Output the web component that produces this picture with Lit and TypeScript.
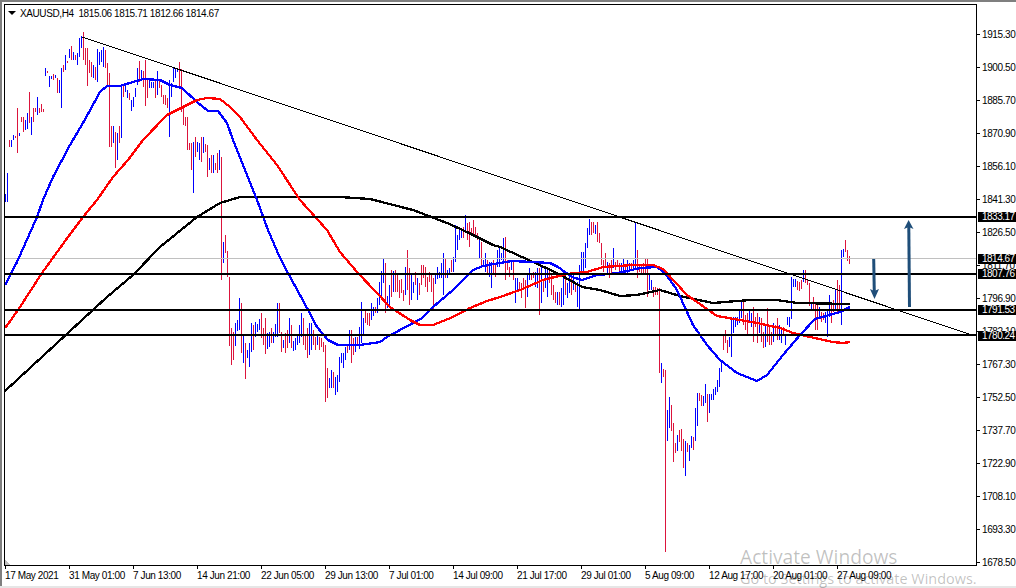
import { LitElement, html, css, svg } from "lit";
import { customElement } from "lit/decorators.js";

type Bar = { x: number; top: number; bot: number; up: boolean };

function seg(ox: number, oy: number, src: string): Bar[] {
  return src
    .trim()
    .split(/\s+/)
    .map((t) => {
      const m = /^(\d+)([rb])(\d+),(\d+)$/.exec(t)!;
      const v = ox + Number(m[1]) / 3;
      return {
        x: 2 * Math.floor(v / 2) + 1,
        top: Math.round(oy + Number(m[3]) / 3),
        bot: Math.round(oy + Number(m[4]) / 3),
        up: m[2] === "b",
      };
    });
}

const BARS: Bar[] = [
  { x: 5, top: 194, bot: 202, up: true },
  { x: 7, top: 173, bot: 202, up: true },
  ...seg(0, 0, `27r420,440 33b420,440 39b405,420 45r408,415 51r325,460 57b400,408 63r352,365 69r350,395 75b360,390 81b338,388 87r277,370 93b350,406 99r325,365 105r325,335 111b292,345 117r325,340 123r312,335 129r328,336
  135b205,228 141r213,218 147b228,260 153b228,238 159r222,240 165b225,235 171r235,280 177b240,280 183b205,325 189r195,215 195b165,210 201r182,190 207b148,175 213r137,180 219b155,180 225r165,180 231b160,195 237b113,170 243b107,145 249r97,180 255r143,195 261r145,258 267r180,220 273r185,230 279b195,235 285r200,240 291b148,245 297b155,195 303b150,185 309b142,200 315r150,205 321r190,255 327r220,440 333r378,440 339b378,430 345r395,505 351b400,480 357r378,430 363b255,415 369r252,290 375b255,275 381b270,295 387r280,300 393b300,333 399b292,320 405b265,290 411b205,255 417r183,245 423b210,240 429r212,260 435r180,318 441r235,295 447b240,265 453b245,265 459b245,265 465r240,295 471b213,285 477r240,265 483r255,290 489r285,312 495r285,315 501r295,325 507b240,410 513b250,290 519b205,245 525b205,235 531b203,215 537r185,262 543r208,335 549r325,375 555r352,378 561r352,450 567r430,450 573r428,510 579b425,578 585r410,470 591b425,455 597b430,480 603r410,485 609b410,460 615r433,455 621r435,530 627b475,510 633r465,520 639b465,520 645r490,510 651r460,520 657b450,510 663r470,840`),
  ...seg(200, 230, `70b35,100 76r15,70 82r62,140 88r140,348 94r293,405 100r305,390 106b280,348 112b270,303 118b204,300 124r220,368 130b315,400 136r340,446 142b360,385 148b338,410 154b280,365 160r285,360 166b275,320 172b282,305 178b266,300 184r250,325 190r293,345 196r265,372 202b310,358 208b305,350 214r295,340 220b305,340 226b282,320 232b220,320 238r220,310 244r305,365 250b330,355 256r310,368 262r300,355 268b265,340 274r285,355 280b333,362 286b325,360 292b315,345 298b285,340 304b250,320 310r265,345 316r315,360 322r295,383 328b280,375 334b280,360 340r300,345 346r320,360 352b315,345 358r320,360 364r325,350 370r335,365 376r345,515 382r415,505 388b445,475 394b420,475 400r425,475 406b440,495 412b435,485 418b380,455 424b370,400 430b368,415 436b350,390 442r345,370 448b300,360 454r300,398 460r325,375 466b320,365 472r320,345 478b290,358 484b215,340 490b265,318 496r240,280 502r250,285 508r250,288 514b220,270 520b230,258 526r230,250 532b205,250 538b155,225 544b122,200 550b85,160 556r98,250 562b198,235 568b165,225 574r120,200 580b122,185 586r120,185 592r132,185 598r150,205 604r148,190 610r180,212 616b110,195 622r60,180 628r115,225 634b130,210 640b155,190 646r125,165 652b145,210 658r160,195 664r105,165`),
  ...seg(360, 210, `189r165,205 195r170,230 201r200,245 207r185,215 213r190,245 219r205,300 225b190,222 231b170,208 237b185,205 243b160,205 249b128,255 255r145,205 261b180,205 267b175,195 273r150,185 279b140,185 285b45,155 291b75,120 297b50,90 303b55,85 309r50,85 315b15,60 321r40,90 327r35,110 333r55,75 339r30,75 345r50,80 351r70,90 357b80,145 363r95,170 369b150,170 375b128,185 381r150,190 387b155,200 393b155,235 399r150,195 405r165,200 411b120,170 417b115,170 423b130,150 429b85,160 435r80,210 441r150,180 447r170,200 453b150,180 459r155,210 465b205,280 471b205,240 477r215,240 483r220,265 489r205,240 495r210,295 501b190,260 507b175,210 513r190,210 519r185,205 525b185,230 531b175,235`),
  ...seg(500, 210, `119r175,315 125b170,280 131r210,245 137b170,235 143b170,260 149r175,220 155r195,255 161r225,270 167r245,280 173b245,285 179r245,285 185b235,290 191b180,285 197r195,255 203b220,265 209b195,250 215r195,255 221b195,240 227r215,245 233b215,290 239b165,297 245b125,195 251b125,195 257b100,175 263b55,115 269b28,75 275r35,75 281r35,70 287b45,72 293r35,95 299r70,100 305r100,165 311r150,185 317r130,175 323b155,190 329r160,205 335r150,195 341b115,175 347r155,180 353r150,170 359r160,185 365b160,190 371b145,195 377r165,190 383b150,195 389b160,185 395r160,180 401b150,180 407b35,175 413r120,205 419r165,185 425r165,190 431r160,190 437r145,190 443r145,260 449b190,240 455b210,240 461r230,260 467r230,255 473r235,255 479r235,490 485b458,520 491r478,500`),
  ...seg(620, 360, `136r30,575 142b150,242 148b110,205 154r135,212 160r190,305 166r250,278 172b225,272 178r210,245 184r207,272 190r237,323 196b243,347 202r250,275 208b255,302 214b228,263 220r232,270 226b145,242 232b100,197 238r100,122 244r105,137 250b108,137 256b72,128 262r102,185 268b103,158 274b103,120 280b88,120 286b82,105 292b60,95 298b25,82 304b0,35`),
  ...seg(500, 210, `669r375,420 675r360,400 681r390,430 687b380,410 693b330,440 699b320,370 705b320,350 711b320,345 717b300,340 723b275,325 729r275,345 735r315,360 741r310,375 747b300,340 753b310,350 759r290,395 765r320,350 771r310,400 777b320,370 783r325,395 789r365,415 795b345,410 801r295,395 807r345,405 813r365,405 819b340,395 825r345,375 831r325,390 837b345,390 843b355,400 849r350,375 855b375,405 861b320,345 867b320,350`),
  ...seg(700, 260, `274b52,178 280b58,80 286b58,80 292r62,90 298r65,92 304r60,88 310b30,65 316r30,70 322r60,75 328r70,138 334b125,150 340r110,150 346r125,210 352r125,210 358b140,175 364r155,185 370r160,180 376b155,190 382b150,230 388b105,170 394r135,190 400r120,155 406b90,150 412r60,155 418r75,160`),
  ...seg(780, 200, `185b150,375 191b148,170 197r120,155 203r150,182 209r168,192`),
];

const BLUE = [[5,285],[17,262],[37,217],[43,200],[53,177],[70,145],[83,123],[100,92],[107,86],[120,86],[133,82],[143,79],[160,80],[170,85],[182,88],[197,102],[208,111],[218,111],[227,123],[233,140],[243,165],[257,200],[268,230],[280,258],[288,273],[307,308],[317,327],[328,340],[338,345],[360,345],[380,342],[387,337],[413,323],[422,318],[433,307],[453,290],[473,270],[483,266],[500,263],[512,261],[533,262],[550,263],[558,267],[572,277],[582,280],[597,275],[610,274],[623,272],[640,268],[657,267],[665,273],[677,290],[693,325],[707,345],[720,360],[737,373],[757,381],[767,375],[783,355],[800,335],[815,319],[840,312],[850,307]];
const RED = [[5,328],[11,320],[20,307],[42,273],[68,237],[83,217],[97,200],[113,177],[128,160],[143,140],[167,115],[197,100],[207,98],[220,99],[230,107],[240,117],[257,140],[277,165],[300,200],[327,230],[340,252],[357,272],[377,293],[390,307],[410,320],[420,325],[433,325],[453,317],[470,308],[487,301],[500,297],[520,290],[543,280],[567,274],[587,272],[603,267],[633,265],[653,265],[663,269],[687,295],[717,316],[757,323],[780,328],[793,333],[810,337],[833,342],[843,343],[850,342]];
const BLACK = [[5,391],[82,320],[107,297],[133,275],[160,247],[197,217],[220,203],[240,197],[257,197],[340,197],[370,199],[413,210],[447,223],[467,232],[493,245],[500,247],[533,262],[557,273],[582,287],[600,290],[620,296],[637,295],[660,290],[680,296],[713,303],[750,300],[777,300],[797,303],[850,304]];

const PRICES = ["1915.30","1900.50","1885.70","1870.90","1856.10","1841.30","1826.50","1811.70","1796.90","1782.10","1767.30","1752.50","1737.70","1722.90","1708.10","1693.30","1678.50"];
const TIMES = ["17 May 2021","31 May 01:00","7 Jun 13:00","14 Jun 21:00","22 Jun 05:00","29 Jun 13:00","7 Jul 01:00","14 Jul 09:00","21 Jul 17:00","29 Jul 01:00","5 Aug 09:00","12 Aug 17:00","20 Aug 01:00","27 Aug 09:00"];
const TAGS: [string, number][] = [["1833.17",212],["1814.67",254],["1807.76",269],["1791.53",305],["1780.24",331]];
const LEVELS = [217, 274, 310, 335];

const pts = (a: number[][]) => a.map((p) => p.join(",")).join(" ");

@customElement("app-root")
export class AppRoot extends LitElement {
  static styles = css`
    :host { display: block; width: 1016px; height: 588px; position: relative; overflow: hidden; background: #fff; font-family: "Liberation Sans", Arial, sans-serif; font-size: 10px; letter-spacing: -0.4px; color: #000; }
    .window { box-sizing: border-box; height: 588px; border-top: 2px solid #7f7f7f; border-bottom: 2px solid #e6e6e6; padding: 2px 0 0 4px; position: relative; display: grid; grid-template-columns: 973px 1fr; grid-template-rows: 562px 1fr; }
    .window::before { content: ""; position: absolute; left: 0; top: -2px; bottom: 0; width: 2px; background: #7f7f7f; }
    .chart { box-sizing: border-box; border: 1px solid #000; position: relative; background: #fff; }
    .plot { display: block; width: 971px; height: 560px; shape-rendering: crispEdges; }
    .bar { stroke-width: 1; }
    .up { stroke: #0000ff; }
    .down { stroke: #dc143c; }
    .ma { fill: none; stroke-width: 2.3; stroke-linejoin: round; }
    .ma-blue { stroke: #0000ff; }
    .ma-red { stroke: #ff0000; }
    .ma-black { stroke: #000; }
    .level { stroke: #000; stroke-width: 2; }
    .bid { stroke: #c0c0c0; stroke-width: 1; }
    .trend { stroke: #000; stroke-width: 1; }
    .arrow { shape-rendering: geometricPrecision; }
    .arrow line { stroke: #1f4e79; stroke-width: 3; }
    .arrow polygon { fill: #1f4e79; }
    .shift { fill: #c0c0c0; }
    .head { position: absolute; left: 3px; top: 2px; display: flex; align-items: center; gap: 4px; height: 12px; white-space: pre; }
    .caret { width: 0; height: 0; border-left: 4px solid transparent; border-right: 4px solid transparent; border-top: 4px solid #000; }
    .axis { position: relative; display: flex; flex-direction: column; padding-top: 14px; }
    .row { height: 33px; display: flex; align-items: center; gap: 2px; flex: none; }
    .tick { width: 3px; height: 1px; background: #000; flex: none; }
    .tag { position: absolute; left: 1px; width: 38px; height: 10px; background: #000; color: #fff; line-height: 10px; padding-left: 4px; box-sizing: border-box; white-space: nowrap; letter-spacing: -0.5px; }
    .times { display: flex; padding-left: 1px; grid-column: 1 / -1; }
    .time { width: 64px; flex: none; white-space: nowrap; }
    .time i { display: block; width: 1px; height: 3px; background: #000; }
    .time span { display: block; line-height: 12px; margin-top: 1px; }
    .wm { position: absolute; left: 740px; font-family: "Open Sans", sans-serif; color: rgba(0,0,0,0.25); white-space: nowrap; letter-spacing: 0; pointer-events: none; }
    .wm1 { top: 545px; font-size: 19.2px; line-height: 24px; }
    .wm2 { top: 570px; font-size: 14.45px; line-height: 18px; }
  `;

  render() {
    return html`
      <div class="window">
        <div class="chart">
          <svg class="plot" viewBox="5 5 971 560">
            ${BARS.map((b) => svg`<line class="bar ${b.up ? "up" : "down"}" x1=${b.x + 0.5} x2=${b.x + 0.5} y1=${b.top} y2=${b.bot}></line>`)}
            <line class="bid" x1="5" x2="976" y1="258.5" y2="258.5"></line>
            <polyline class="ma ma-black" points=${pts(BLACK)}></polyline>
            <polyline class="ma ma-blue" points=${pts(BLUE)}></polyline>
            <polyline class="ma ma-red" points=${pts(RED)}></polyline>
            ${LEVELS.map((y) => svg`<line class="level" x1="5" x2="976" y1=${y} y2=${y}></line>`)}
            <line class="trend" x1="82" y1="37" x2="975" y2="336"></line>
            <polygon class="shift" points="5,560 10,565 5,565"></polygon>
            <g class="arrow">
              <line x1="873.7" y1="259" x2="874.3" y2="293"></line>
              <polygon points="874.5,299 870,289 874.3,291 879,289"></polygon>
              <line x1="909.5" y1="307" x2="908.8" y2="227"></line>
              <polygon points="908.6,220 904,229 908.8,227 913.5,229"></polygon>
            </g>
          </svg>
          <div class="head"><span class="caret"></span><span>XAUUSD,H4  1815.06 1815.71 1812.66 1814.67</span></div>
        </div>
        <div class="axis">
          ${PRICES.map((p) => html`<div class="row"><span class="tick"></span><span>${p}</span></div>`)}
          ${TAGS.map(([p, y]) => html`<div class="tag" style="top:${y - 4}px">${p}</div>`)}
        </div>
        <div class="times">
          ${TIMES.map((t) => html`<div class="time"><i></i><span>${t}</span></div>`)}
        </div>
      </div>
      <div class="wm wm1">Activate Windows</div>
      <div class="wm wm2">Go to Settings to activate Windows.</div>
    `;
  }
}
